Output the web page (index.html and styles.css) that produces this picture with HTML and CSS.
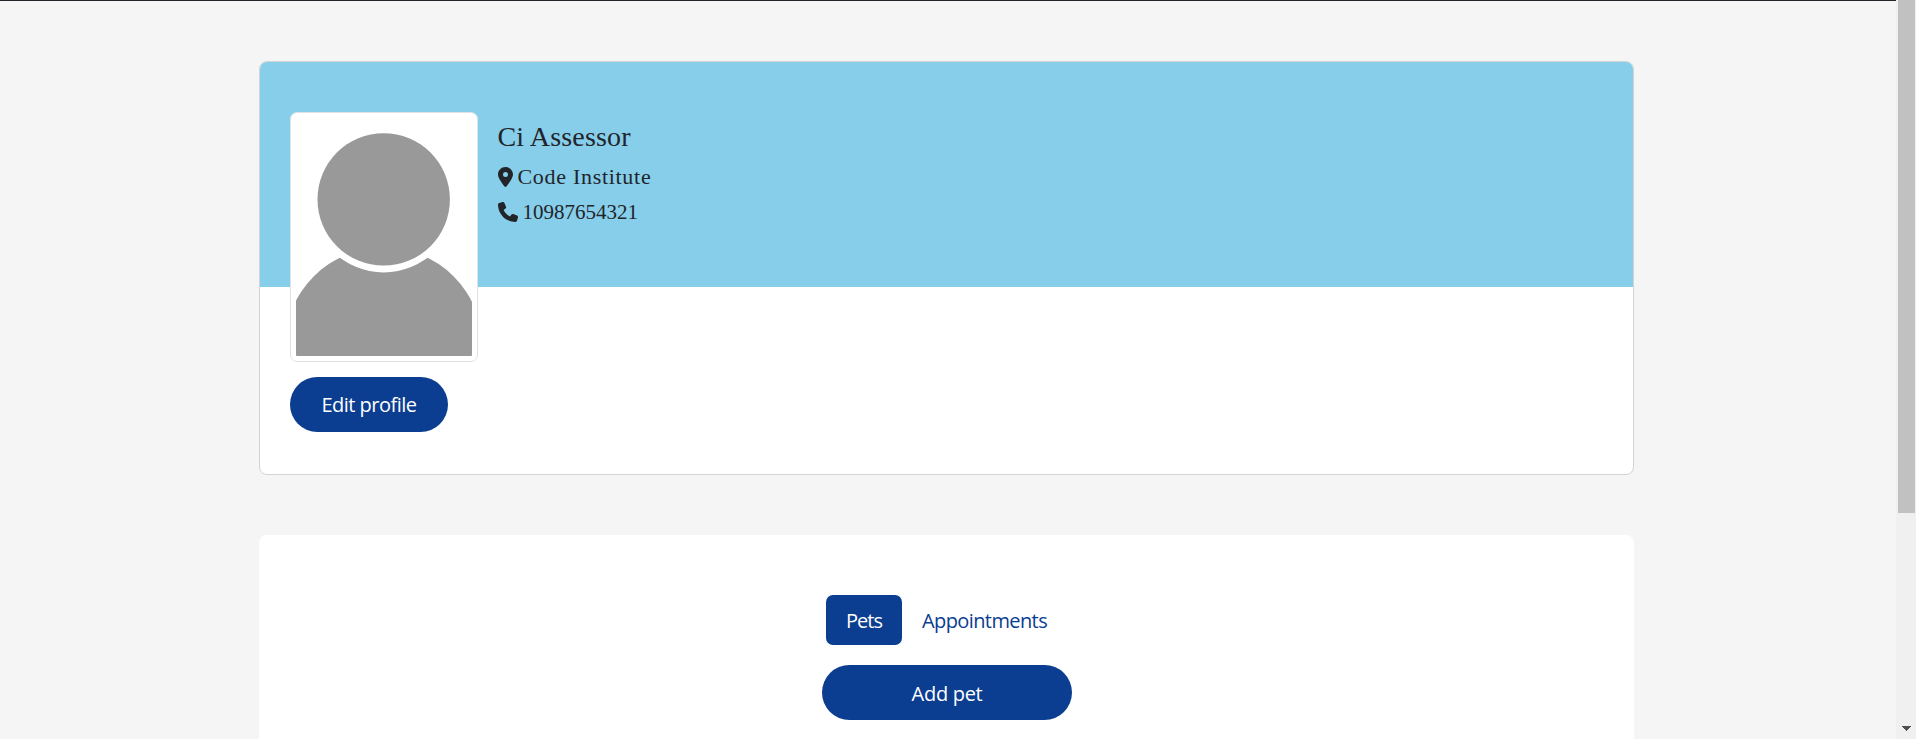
FILE: index.html
```html
<!DOCTYPE html>
<html lang="en">
<head>
<meta charset="utf-8">
<title>Profile</title>
<link rel="stylesheet" href="styles.css">
</head>
<body>
<main class="page">
  <section class="card profile">
    <header class="banner">
      <div class="photo">
        <svg viewBox="0 0 176 238" width="176" height="238">
          <circle class="person" cx="87.7" cy="228.4" r="99"/>
          <circle class="gap" cx="87.700" cy="81.4" r="73"/>
          <circle class="person" cx="87.7" cy="81.4" r="66.2"/>
        </svg>
      </div>
      <div class="details">
        <h1 class="name">Ci Assessor</h1>
        <p class="line">
          <svg class="pin" viewBox="0 0 384 512" width="15" height="20"><path d="M215.700 499.200C267 435 384 279.400 384 192 384 86 298 0 192 0S0 86 0 192c0 87.400 117 243 168.300 307.200 12.300 15.300 35.100 15.300 47.400 0zM192 128a64 64 0 1 1 0 128 64 64 0 1 1 0-128z"/></svg>
          <span class="place">Code Institute</span>
        </p>
        <p class="line">
          <svg viewBox="0 0 512 512" width="20" height="20"><path d="M164.900 24.600c-7.700-18.600-28-28.500-47.400-23.200l-88 24C12.100 30.200 0 46 0 64c0 247.400 200.600 448 448 448 18 0 33.800-12.100 38.600-29.500l24-88c5.300-19.400-4.600-39.700-23.200-47.400l-96-40c-16.300-6.800-35.200-2.100-46.300 11.600L304.700 368C234.300 334.700 177.300 277.700 144 207.300L193.300 167c13.700-11.200 18.400-30 11.600-46.300l-40-96z"/></svg>
          <span class="phone">10987654321</span>
        </p>
      </div>
    </header>
    <div class="actions"><button class="pill edit">Edit profile</button></div>
  </section>
  <section class="card records">
    <nav class="tabs">
      <a class="tab active">Pets</a>
      <a class="tab appointments">Appointments</a>
    </nav>
    <button class="pill add">Add pet</button>
  </section>
</main>
<aside class="scrollbar">
  <div class="thumb"></div>
  <svg class="arrow" viewBox="0 0 9 5" width="9" height="5"><path d="M0 0h9v1H8v1H7v1H6v1H5v1H4V4H3V3H2V2H1V1H0z"/></svg>
</aside>
</body>
</html>
```

FILE: styles.css
```css
* { box-sizing: border-box; }
body {
  margin: 0;
  height: 739px;
  display: flex;
  overflow: hidden;
  background: #f5f5f5;
  color: #212529;
  font-family: "Open Sans", "Noto Sans", sans-serif;
  font-size: 20px;
}
svg { display: block; flex: none; fill: #212529; }
.page {
  flex: 1;
  height: 739px;
  overflow: hidden;
  border-top: 1px solid #212529;
  padding: 60px 262px 0 259px;
}
.card { width: 1375px; background: #fff; border-radius: 8px; }
.profile { height: 414px; border: 1px solid #d2d3d3; }
.banner {
  height: 225px;
  display: flex;
  align-items: flex-start;
  padding: 50px 30px 0 29.5px;
  background: #87ceeb;
  border-radius: 7px 7px 0 0;
}
.photo {
  width: 188px;
  height: 250px;
  padding: 5px;
  border: 1px solid #dee2e6;
  border-radius: 7px;
  background: #fff;
}
.photo svg { border-radius: 1px; }
.person { fill: #999; }
.gap { fill: #fff; }
.details {
  margin-left: 20px;
  padding-top: 9px;
  font-family: "Liberation Serif", serif;
}
.name { margin: 0 0 6px; font-size: 28px; line-height: 32px; font-weight: 400; letter-spacing: 0.15px; }
.line { margin: 0; height: 35px; display: flex; align-items: center; font-size: 21px; line-height: 30px; }
.place { margin-left: 5px; font-size: 22px; letter-spacing: 0.7px; }
.phone { margin-left: 5px; }
.actions { padding: 90px 30px 0; }
.pill {
  display: block;
  height: 55px;
  padding: 0;
  border: 0;
  border-radius: 28px;
  background: #0b3d91;
  color: #fff;
  font: inherit;
}
.edit { width: 158px; letter-spacing: -0.5px; }
.records { height: 300px; margin-top: 60px; padding-top: 60px; }
.tabs { display: flex; margin: 0 0 20px 567px; }
.tab { height: 50px; line-height: 51px; padding-left: 20px; color: #0b3d91; }
.appointments { letter-spacing: -0.6px; }
.active { width: 76px; border-radius: 7px; background: #0b3d91; color: #fff; letter-spacing: -1px; }
.add { width: 250px; margin-left: 563px; padding-top: 2px; letter-spacing: -0.3px; }
.scrollbar {
  width: 20px;
  height: 739px;
  padding: 0 1px 0 2px;
  display: flex;
  flex-direction: column;
  justify-content: space-between;
  background: #f0f0f0;
}
.thumb { height: 513px; background: #c1c1c1; }
.arrow { margin: 0 0 8px 4px; fill: #505050; }
```
